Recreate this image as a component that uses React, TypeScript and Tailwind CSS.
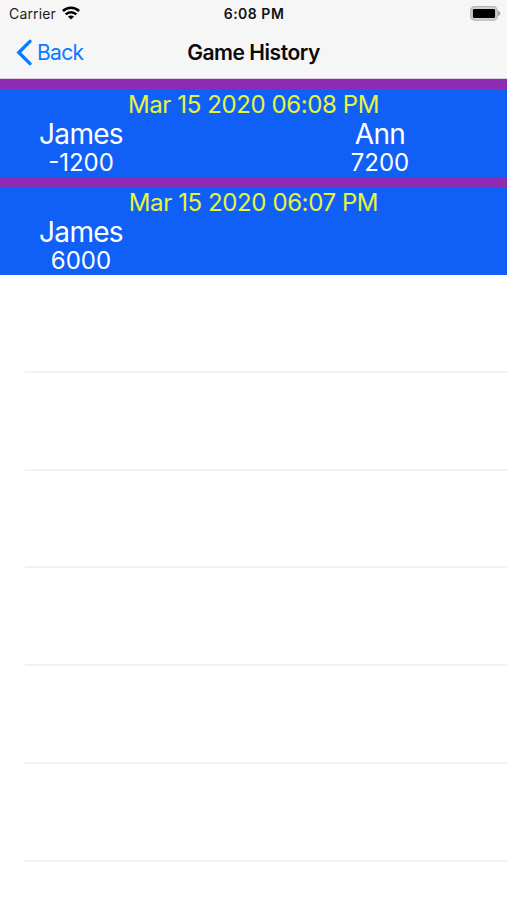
type Player = { name: string; score: string };
type Game = { date: string; players: Player[] };

const games: Game[] = [
  {
    date: 'Mar 15 2020 06:08 PM',
    players: [
      { name: 'James', score: '-1200' },
      { name: 'Ann', score: '7200' },
    ],
  },
  {
    date: 'Mar 15 2020 06:07 PM',
    players: [{ name: 'James', score: '6000' }],
  },
];

const emptyRows = ['h-[98px]', 'h-[98px]', 'h-[97px]', 'h-[98px]', 'h-[98px]', 'h-[98px]'];

function StatusBar() {
  return (
    <div className="grid h-[27px] grid-cols-3 items-center pl-[9px] pr-[6px] text-[14px] leading-none text-[#1c1c1c]">
      <div className="flex items-center gap-[6px]">
        <span className="tracking-[0.15px]">Carrier</span>
        <svg className="-mt-[2px]" width="18" height="14" viewBox="0 0 18 14" fill="none" stroke="#000" strokeWidth="2.5">
          <path d="M0.9 5C5.4 0.6 12.6 0.6 17.1 5" />
          <path d="M3.7 8.3C6.7 5.4 11.3 5.4 14.3 8.3" />
          <path d="M9 13.6L5.9 10.5C7.6 9 10.4 9 12.1 10.5Z" fill="#000" stroke="none" />
        </svg>
      </div>
      <span className="pr-[2px] text-center font-semibold tracking-[0.5px] text-[#111]">6:08 PM</span>
      <svg className="-mt-px justify-self-end" width="31" height="15" viewBox="0 0 31 15">
        <rect x="0.7" y="0.7" width="26.6" height="13.4" rx="3.8" fill="#d4d4d4" stroke="#b4b4b4" strokeWidth="1.2" />
        <rect x="2.9" y="3" width="22.2" height="9" rx="1.2" fill="#000" />
        <path d="M28.2 4.8C31 6.2 31 8.6 28.2 10Z" fill="#999" />
      </svg>
    </div>
  );
}

function NavBar() {
  return (
    <div className="grid h-[52px] grid-cols-[1fr_auto_1fr] items-center border-b border-[#dccbe0] text-[21px] leading-none">
      <button className="flex items-center gap-[5px] pl-4 text-[#0a7aff]">
        <svg width="16" height="27" viewBox="0 0 16 27" fill="none" stroke="currentColor" strokeWidth="3.4" strokeLinecap="round">
          <path d="M14 2.4L2.8 13.5L14 24.6" />
        </svg>
        <span className="tracking-[-0.65px]">Back</span>
      </button>
      <h1 className="font-semibold tracking-[-0.45px] text-[#0b0b0b]">Game History</h1>
      <span />
    </div>
  );
}

function GameRow({ game }: { game: Game }) {
  return (
    <section className="text-center text-white">
      <div className="h-[10px] bg-[#8e2bb3]" />
      <div className="h-[88px] bg-[#1060f7]">
        <div className="h-[29px] text-[24px] leading-[31px] tracking-[-0.4px] text-[#e6f53c]">{game.date}</div>
        <div className="flex justify-between px-[10px]">
          {game.players.map((p) => (
            <div key={p.name} className="w-[142px] last:not-first:w-[234px]">
              <div className="h-[30px] text-[28px] leading-[32px] tracking-[-0.7px]">{p.name}</div>
              <div className="h-[29px] text-[24px] leading-[29px]">{p.score}</div>
            </div>
          ))}
        </div>
      </div>
    </section>
  );
}

export default function App() {
  return (
    <main className="h-[900px] w-[507px] overflow-hidden bg-white font-['Inter','Liberation_Sans',sans-serif]">
      <header className="h-[79px] bg-[#f7f6f7]">
        <StatusBar />
        <NavBar />
      </header>
      {games.map((g) => (
        <GameRow key={g.date} game={g} />
      ))}
      <div className="pl-[25px]">
        {emptyRows.map((h, i) => (
          <div key={i} className={`${h} border-b-2 border-[#f2f2f2]`} />
        ))}
      </div>
    </main>
  );
}
